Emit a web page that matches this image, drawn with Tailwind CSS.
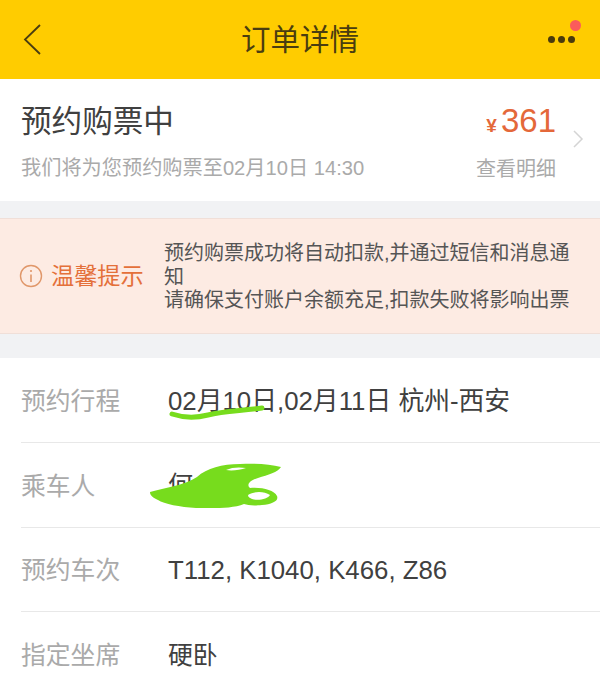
<!DOCTYPE html>
<html lang="zh-CN">
<head>
  <meta charset="UTF-8" />
  <meta name="viewport" content="width=device-width, initial-scale=1.0" />
  <title>订单详情</title>
  <script src="https://cdn.jsdelivr.net/npm/@tailwindcss/browser@4"></script>
</head>
<body class="bg-white font-['Liberation_Sans','Noto_Sans_CJK_SC',sans-serif] text-[#333]">
  <div class="w-[600px] h-[684px] overflow-hidden">
    <header class="relative h-[79px] bg-[#ffcc00] flex items-center justify-center">
      <svg class="absolute left-[22px] top-[24px]" width="22" height="32" viewBox="0 0 22 32" fill="none">
        <path d="M18 1 3 15.500 18 30" stroke="#4a3d10" stroke-width="1.800" />
      </svg>
      <h1 class="text-[29.500px] leading-none text-[#4a3d10]">订单详情</h1>
      <div class="absolute left-[547.500px] top-[35.500px] flex gap-[3px]">
        <span class="w-[7px] h-[7px] rounded-full bg-[#4a3a0c]"></span>
        <span class="w-[7px] h-[7px] rounded-full bg-[#4a3a0c]"></span>
        <span class="w-[7px] h-[7px] rounded-full bg-[#4a3a0c]"></span>
      </div>
      <span class="absolute left-[570px] top-[19.500px] w-[11px] h-[11px] rounded-full bg-[#fb5b5b]"></span>
    </header>

    <section class="relative h-[122px] bg-white flex justify-between pl-[21px] pr-[44px]">
      <div>
        <h2 class="mt-[24px] text-[30.600px] leading-[36px] text-[#404040]">预约购票中</h2>
        <p class="mt-[16px] text-[20.200px] leading-[26px] text-[#aaa]">我们将为您预约购票至02月10日 14:30</p>
      </div>
      <div class="flex flex-col items-end">
        <p class="mt-[22px] leading-[40px] text-[#e4683a]"><span class="text-[19px] font-bold mr-[4px]">¥</span><span class="text-[33px]">361</span></p>
        <p class="mt-[9px] text-[20px] leading-[26px] text-[#aaa]">查看明细</p>
      </div>
      <svg class="absolute right-[16px] top-[50px]" width="12" height="20" viewBox="0 0 12 20" fill="none">
        <path d="M2 2 10 10 2 18" stroke="#d4d4d4" stroke-width="1.500" />
      </svg>
    </section>

    <div class="h-[17px] bg-[#f1f2f4]"></div>

    <section class="h-[116px] bg-[#fdebe3] border-y border-[#f0dfd8] flex items-center pl-[19px]">
      <svg class="shrink-0" width="24" height="24" viewBox="0 0 24 24" fill="none">
        <circle cx="12" cy="12" r="10.500" stroke="#e0976a" stroke-width="1.400" />
        <path d="M12 10.500V18" stroke="#e0976a" stroke-width="1.600" />
        <circle cx="12" cy="7" r="1.100" fill="#e0976a" />
      </svg>
      <span class="ml-[8px] w-[113px] shrink-0 text-[23.200px] text-[#e4703a]">温馨提示</span>
      <p class="w-[412px] pt-[3px] text-[20px] leading-[23.500px] text-[#555]">预约购票成功将自动扣款,并通过短信和消息通知<br />请确保支付账户余额充足,扣款失败将影响出票</p>
    </section>

    <div class="h-[24px] bg-[#f1f2f4]"></div>

    <section class="relative pl-[21px]">
      <div class="h-[85px] flex items-center border-b border-[#e8e8e8]">
        <span class="w-[147px] text-[24.800px] pt-[3px] text-[#aaa]">预约行程</span>
        <span class="text-[25.800px] pt-[2px] text-[#404040]">02月10日,02月11日 杭州-西安</span>
      </div>
      <div class="h-[85px] flex items-center border-b border-[#e8e8e8]">
        <span class="w-[147px] text-[24.800px] pt-[3px] text-[#aaa]">乘车人</span>
        <span class="text-[25px] pt-[2px] text-[#404040]">何</span>
      </div>
      <div class="h-[84px] flex items-center border-b border-[#e8e8e8]">
        <span class="w-[147px] text-[24.800px] pt-[3px] text-[#aaa]">预约车次</span>
        <span class="text-[25.800px] pt-[2px] text-[#404040]">T112, K1040, K466, Z86</span>
      </div>
      <div class="h-[85px] flex items-center">
        <span class="w-[147px] text-[24.800px] pt-[3px] text-[#aaa]">指定坐席</span>
        <span class="text-[24.800px] pt-[2px] text-[#404040]">硬卧</span>
      </div>
      <!-- green marker scribbles drawn over the screenshot -->
      <svg class="absolute left-0 top-0 pointer-events-none" width="600" height="326" viewBox="0 0 600 326" fill="none">
        <path d="M172 56C184 60 196 60 208 57C224 53 240 53 262 50" stroke="#77dc1d" stroke-width="5" stroke-linecap="round" />
        <path d="M150 134C165 130 185 127 197 119C207 110 222 106 240 106C255 105 270 106 281 109C278 114 268 117 258 120C250 122 246 127 250 130C262 129 274 132 277 138C279 143 272 146 262 147C252 148 248 147 244 146C232 151 212 150 196 150C180 149 164 146 158 142C154 140 150 138 150 134Z" fill="#77dc1d" />
        <path d="M248 137C254 133 264 133 270 137C268 141 258 143 252 141C250 140 248 139 248 137Z" fill="#fff" />
        <path d="M226 112C232 109 240 109 246 110C240 112 232 113 226 112Z" fill="#fff" />
      </svg>
    </section>
  </div>
</body>
</html>
